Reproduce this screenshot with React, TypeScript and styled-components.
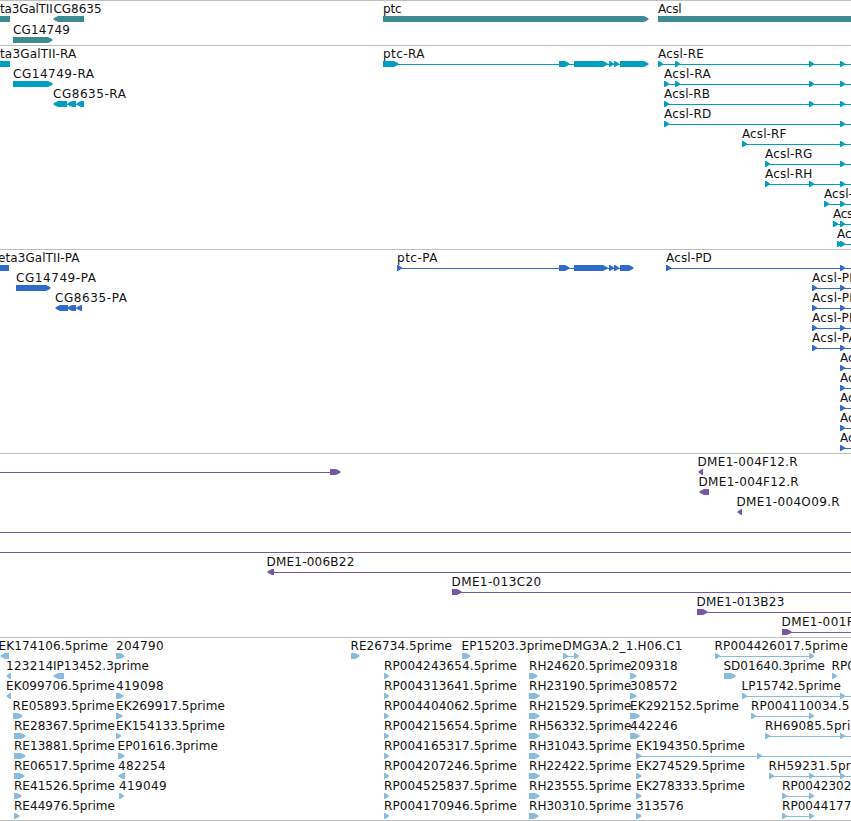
import React from 'react';
import styled, { createGlobalStyle } from 'styled-components';

const FONT = '12px "DejaVu Sans"';

const GlobalStyle = createGlobalStyle`
  body {
    margin: 0;
    background: #fff;
  }
`;

const Browser = styled.div`
  display: flex;
  flex-direction: column;
  width: 851px;
  height: 821px;
  overflow: hidden;
  font: 12px/16px 'DejaVu Sans', sans-serif;
  color: #111;
`;

const TrackBox = styled.section<{ $height: number }>`
  display: flex;
  flex: none;
  flex-direction: column;
  box-sizing: border-box;
  height: ${(p) => p.$height}px;
  border-top: 1px solid #bebebe;
`;

const RowBox = styled.div<{ $height: number }>`
  flex: none;
  height: ${(p) => p.$height}px;
`;

const Labels = styled.div`
  position: relative;
  height: 15px;
`;

// a label sits at the genome coordinate of its feature
const Label = styled.span`
  position: absolute;
  top: 0;
  white-space: pre;
`;

const Glyphs = styled.svg`
  display: block;
  width: 851px;
  height: 6px;
`;

type Part = [number, number?];

interface Feature {
  label: string;
  x: number;
  width: number;
  parts: Part[];
  line?: [number, number];
  kind: 'right' | 'left' | 'block';
}

interface TrackData {
  name: string;
  color: string;
  height: number;
  rowHeight: number;
  rows: Feature[][];
}

const feature = (kind: Feature['kind']) => (
  label: string,
  x: number,
  width: number,
  parts: Part[],
  line?: [number, number]
): Feature => ({ label, x, width, parts, line, kind });

const fwd = feature('right');
const rev = feature('left');
const block = feature('block');

// the column of RP / RH reads repeats at the same place on most rows
const rp = (label: string) => fwd(label, 384, 133, [[384]]);
const rh = (label: string, end = 540) => fwd(label, 529, 102.5, [[529, end]]);

const tracks: TrackData[] = [
  {
    name: 'gene',
    color: '#3e8c93',
    height: 45,
    rowHeight: 21,
    rows: [
      [
        block('ta3GalTII', 0, 52.5, [[0, 10]]),
        rev('CG8635', 53.5, 48, [[53, 84]]),
        fwd('ptc', 383, 18.5, [[383, 649]]),
        block('Acsl', 658, 23.5, [[658, 851]]),
      ],
      [fwd('CG14749', 13, 57, [[13, 53]])],
    ],
  },
  {
    name: 'transcript',
    color: '#009fc1',
    height: 204,
    rowHeight: 20,
    rows: [
      [
        block('ta3GalTII-RA', 0, 76.5, [[0, 10]]),
        fwd('ptc-RA', 383, 42, [[383, 399], [559, 570], [574, 608], [609], [614], [620, 649]], [383, 645]),
        fwd('Acsl-RE', 658, 46, [[658], [675], [809], [840]], [658, 851]),
      ],
      [
        fwd('CG14749-RA', 13, 81.5, [[13, 53]]),
        fwd('Acsl-RA', 664, 47, [[664], [675], [809], [840]], [664, 851]),
      ],
      [
        rev('CG8635-RA', 53, 73.5, [[53, 67], [67, 76], [76, 84]], [55, 82]),
        fwd('Acsl-RB', 664, 46, [[664], [809], [840]], [664, 851]),
      ],
      [fwd('Acsl-RD', 664, 47.5, [[664], [840]], [664, 851])],
      [fwd('Acsl-RF', 742, 44.5, [[742], [840]], [742, 851])],
      [fwd('Acsl-RG', 765, 47.5, [[765], [840]], [765, 851])],
      [fwd('Acsl-RH', 765, 47.5, [[765], [809], [840]], [765, 851])],
      [fwd('Acsl-', 824, 29, [[824], [840]], [824, 851])],
      [fwd('Acs', 833, 20, [[833], [840]], [833, 851])],
      [fwd('Ac', 837, 14.5, [[837], [840]], [837, 851])],
    ],
  },
  {
    name: 'CDS',
    color: '#306bcb',
    height: 204,
    rowHeight: 20,
    rows: [
      [
        block('eta3GalTII-PA', -2, 81.5, [[0, 9]]),
        fwd('ptc-PA', 397, 41, [[397], [559, 570], [574, 608], [609], [614], [620, 634]], [397, 630]),
        fwd('Acsl-PD', 666, 46, [[666], [840]], [666, 851]),
      ],
      [
        fwd('CG14749-PA', 16, 80.5, [[16, 51]]),
        fwd('Acsl-PE', 812, 45, [[812], [840]], [812, 851]),
      ],
      [
        rev('CG8635-PA', 55, 72.5, [[55, 68], [67, 76], [76, 82]], [57, 81]),
        fwd('Acsl-PF', 812, 44.5, [[812], [840]], [812, 851]),
      ],
      [fwd('Acsl-PB', 812, 45.5, [[812], [840]], [812, 851])],
      [fwd('Acsl-PA', 812, 45, [[812], [840]], [812, 851])],
      [fwd('Ac', 840, 14.5, [[840]], [840, 851])],
      [fwd('Ac', 840, 14.5, [[840]], [840, 851])],
      [fwd('Ac', 840, 14.5, [[840]], [840, 851])],
      [fwd('Ac', 840, 14.5, [[840]], [840, 851])],
      [fwd('Ac', 840, 14.5, [[840]], [840, 851])],
    ],
  },
  {
    name: 'BAC',
    color: '#7657a7',
    height: 184,
    rowHeight: 20,
    rows: [
      [
        fwd('', 0, 0, [[330, 341]], [0, 338]),
        rev('DME1-004F12.R', 697.5, 100.5, [[698, 703]]),
      ],
      [rev('DME1-004F12.R', 698.5, 100.5, [[699, 709]])],
      [rev('DME1-004O09.R', 736.5, 103.5, [[737, 742]])],
      [fwd('', 0, 0, [], [0, 851])],
      [fwd('', 0, 0, [], [0, 851])],
      [rev('DME1-006B22', 266.5, 88, [[267, 274]], [270, 851])],
      [fwd('DME1-013C20', 451.5, 90, [[452, 462]], [452, 851])],
      [fwd('DME1-013B23', 696.5, 88, [[697, 708]], [697, 851])],
      [fwd('DME1-001F', 781.5, 72.5, [[782, 792]], [782, 851])],
    ],
  },
  {
    name: 'EST',
    color: '#88bcde',
    height: 183,
    rowHeight: 20,
    rows: [
      [
        rev('EK174106.5prime', -1.5, 109.5, [[0, 9]]),
        fwd('204790', 116, 48, [[116, 125]]),
        fwd('RE26734.5prime', 350.5, 101.5, [[351, 360]]),
        fwd('EP15203.3prime', 461.5, 100.5, [[462, 471]]),
        fwd('DMG3A.2_1.H06.C1', 562.5, 120, [[563], [574]], [563, 576]),
        fwd('RP004426017.5prime', 714.5, 133.5, [[715], [809]], [715, 811]),
      ],
      [
        rev('123214', 6, 47.5, [[6, 11]]),
        rev('IP13452.3prime', 53, 96, [[53, 64]]),
        rp('RP004243654.5prime'),
        rh('RH24620.5prime', 538),
        fwd('209318', 630, 48, [[630, 637]]),
        fwd('SD01640.3prime', 723.5, 101.5, [[724, 736]]),
        fwd('RP0', 831.5, 23.5, [[832]]),
      ],
      [
        rev('EK099706.5prime', 6, 109, [[6, 11]]),
        fwd('419098', 116, 48, [[116, 124]]),
        rp('RP004313641.5prime'),
        rh('RH23190.5prime'),
        fwd('308572', 630, 48, [[630, 637]]),
        fwd('LP15742.5prime', 741.5, 99.5, [[742], [840]], [742, 851]),
      ],
      [
        fwd('RE05893.5prime', 12.5, 102, [[13, 23]]),
        fwd('EK269917.5prime', 116, 109, [[116, 123]]),
        rp('RP004404062.5prime'),
        rh('RH21529.5prime'),
        fwd('EK292152.5prime', 630, 109, [[630, 640]]),
        fwd('RP004110034.5', 751, 98.5, [[751], [809]], [751, 811]),
      ],
      [
        fwd('RE28367.5prime', 14, 101, [[14, 26]]),
        fwd('EK154133.5prime', 116, 109, [[116]]),
        rp('RP004215654.5prime'),
        rh('RH56332.5prime'),
        fwd('442246', 630, 48, [[630, 640]]),
        fwd('RH69085.5pri', 765, 85.5, [[765], [840]], [765, 851]),
      ],
      [
        fwd('RE13881.5prime', 14, 101, [[14, 26]]),
        fwd('EP01616.3prime', 117.5, 100.5, [[118, 125]]),
        rp('RP004165317.5prime'),
        rh('RH31043.5prime'),
        fwd('EK194350.5prime', 636, 109, [[636, 642], [757]], [636, 851]),
      ],
      [
        fwd('RE06517.5prime', 14, 101, [[14, 25]]),
        rev('482254', 118, 48, [[118, 125]]),
        rp('RP004207246.5prime'),
        rh('RH22422.5prime'),
        fwd('EK274529.5prime', 636, 109, [[636, 642]]),
        fwd('RH59231.5pr', 768.5, 82.5, [[769], [809], [840]], [769, 851]),
      ],
      [
        fwd('RE41526.5prime', 14, 101, [[14, 22]]),
        fwd('419049', 119, 48, [[119]]),
        rp('RP004525837.5prime'),
        rh('RH23555.5prime'),
        fwd('EK278333.5prime', 636, 109, [[636, 642]]),
        fwd('RP0042302', 782, 69.5, [[782], [809]], [782, 811]),
      ],
      [
        fwd('RE44976.5prime', 14, 101, [[14, 20]]),
        rp('RP004170946.5prime'),
        rh('RH30310.5prime', 539),
        fwd('313576', 636, 48, [[636, 642]]),
        fwd('RP0044177', 782, 69.5, [[782], [809]], [782, 811]),
      ],
    ],
  },
];

const ctx = document.createElement('canvas').getContext('2d')!;

// letter spacing that makes the label fill its width
const spacing = (text: string, width: number) => {
  ctx.font = FONT;
  return (width - ctx.measureText(text).width) / text.length;
};

// a box whose pointed end has a small shoulder on each side
const outline = (kind: Feature['kind'], [start, stop]: Part) => {
  const end = stop ?? start + 5.5;
  if (kind === 'block') return `${start},0 ${end},0 ${end},6 ${start},6`;
  const head = Math.min(end - start - 1, 5);
  const [tail, tip, dir] = kind === 'left' ? [end, start, 1] : [start, end, -1];
  const neck = tip + dir * head;
  const shoulder = tip + dir * 2;
  return `${tail},0 ${neck},0 ${shoulder},1.6 ${tip},3 ${shoulder},4.4 ${neck},6 ${tail},6`;
};

const Row: React.FC<{ features: Feature[]; height: number; color: string }> = ({ features, height, color }) => (
  <RowBox $height={height}>
    <Labels>
      {features.filter((f) => f.label).map((f) => (
        <Label key={f.x} style={{ left: f.x, letterSpacing: spacing(f.label, f.width) }}>
          {f.label}
        </Label>
      ))}
    </Labels>
    <Glyphs viewBox="0 0 851 6" fill={color}>
      {features.map((f) => (
        <g key={f.x}>
          {f.line && <rect x={f.line[0]} y={3} width={f.line[1] - f.line[0]} height={1} />}
          {f.parts.map((part) => (
            <polygon key={part[0]} points={outline(f.kind, part)} />
          ))}
        </g>
      ))}
    </Glyphs>
  </RowBox>
);

const App: React.FC = () => {
  return (
    <>
      <GlobalStyle />
      <Browser>
        {tracks.map((track) => (
          <TrackBox key={track.name} $height={track.height}>
            {track.rows.map((features, i) => (
              <Row key={i} features={features} height={track.rowHeight} color={track.color} />
            ))}
          </TrackBox>
        ))}
        <TrackBox $height={1} />
      </Browser>
    </>
  );
};

export default App;
